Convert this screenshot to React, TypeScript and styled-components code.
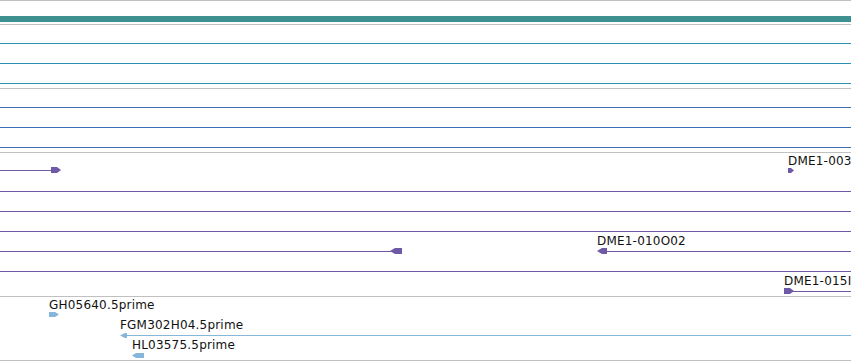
import React from "react";
import styled, { createGlobalStyle } from "styled-components";

const Global = createGlobalStyle`
  html, body { margin: 0; padding: 0; background: #ffffff; overflow: hidden; }
  #root { width: 851px; height: 361px; overflow: hidden; }
`;

const View = styled.div`
  width: 851px;
  display: flex;
  flex-direction: column;
  font-family: "DejaVu Sans", sans-serif;
`;

const Track = styled.div<{ $h: number }>`
  flex: none;
  border-top: 1px solid #c0c0c0;
  height: ${(p) => p.$h}px;
  display: flex;
  flex-direction: column;
`;

const OverviewBar = styled.div`
  margin-top: 15px;
  height: 6px;
  background: #3f9090;
`;

const Row = styled.div`
  position: relative;
  flex: none;
  height: 20px;
`;

const FeatureBox = styled.div<{ $x: number; $w: number }>`
  position: absolute;
  top: 0;
  bottom: 0;
  left: ${(p) => p.$x}px;
  width: ${(p) => p.$w}px;
`;

const Label = styled.div`
  position: absolute;
  left: 0;
  top: 1px;
  font-size: 12px;
  line-height: 14px;
  letter-spacing: 0.2px;
  color: #111111;
  white-space: nowrap;
`;

const Line = styled.div<{ $y: number; $c: string; $from: number; $to: number }>`
  position: absolute;
  top: ${(p) => p.$y}px;
  left: ${(p) => p.$from}px;
  width: ${(p) => p.$to - p.$from}px;
  height: 1px;
  background: ${(p) => p.$c};
`;

const Arrow = styled.svg<{ $y: number; $x: number }>`
  position: absolute;
  top: ${(p) => p.$y}px;
  left: ${(p) => p.$x}px;
  display: block;
`;

type Dir = "left" | "right";
type Feat = {
  x: number;
  w: number;
  label?: string;
  line?: [number, number];
  arrow?: { at: number; w: number; h: number; dir: Dir; tip?: number };
  y?: number;
};

const TEAL = "#2a8fae";
const BLUE = "#3b6db5";
const PURPLE = "#6e59a6";
const LIGHT = "#86b6da";

function ArrowHead({ a, y, c }: { a: NonNullable<Feat["arrow"]>; y: number; c: string }) {
  const tip = a.tip ?? Math.min(4, a.w);
  const { w, h } = a;
  const pts =
    a.dir === "right"
      ? `0,0 ${w - tip},0 ${w},${h / 2} ${w - tip},${h} 0,${h}`
      : `0,${h / 2} ${tip},0 ${w},0 ${w},${h} ${tip},${h}`;
  return (
    <Arrow $x={a.at} $y={y - Math.floor(h / 2)} width={w} height={h} viewBox={`0 0 ${w} ${h}`}>
      <polygon points={pts} fill={c} />
    </Arrow>
  );
}

function Feature({ f, c }: { f: Feat; c: string }) {
  const y = f.y ?? 18;
  return (
    <FeatureBox $x={f.x} $w={f.w}>
      {f.label && <Label>{f.label}</Label>}
      {f.line && <Line $y={y} $c={c} $from={f.line[0]} $to={f.line[1]} />}
      {f.arrow && <ArrowHead a={f.arrow} y={y} c={c} />}
    </FeatureBox>
  );
}

const full: Feat = { x: 0, w: 851, line: [0, 851] };

const dRows: Feat[][] = [
  [
    { x: 0, w: 61, y: 17, line: [0, 53], arrow: { at: 51, w: 10, h: 6, dir: "right" } },
    { x: 788, w: 63, y: 17, label: "DME1-003", arrow: { at: 0, w: 6, h: 5, dir: "right", tip: 3 } },
  ],
  [full],
  [full],
  [full],
  [
    { x: 0, w: 402, line: [0, 392], arrow: { at: 390, w: 12, h: 6, dir: "left", tip: 5 } },
    { x: 597, w: 254, label: "DME1-010O02", line: [4, 254], arrow: { at: 0, w: 10, h: 6, dir: "left", tip: 5 } },
  ],
  [full],
  [{ x: 784, w: 67, label: "DME1-015I", line: [6, 67], arrow: { at: 0, w: 10, h: 6, dir: "right" } }],
];

const eRows: Feat[][] = [
  [{ x: 49, w: 100, y: 17, label: "GH05640.5prime", arrow: { at: 0, w: 10, h: 5, dir: "right", tip: 4 } }],
  [{ x: 120, w: 731, label: "FGM302H04.5prime", line: [4, 731], arrow: { at: 0, w: 7, h: 5, dir: "left", tip: 5 } }],
  [{ x: 132, w: 100, label: "HL03575.5prime", arrow: { at: 0, w: 12, h: 5, dir: "left", tip: 4 } }],
];

function Rows({ rows, c }: { rows: Feat[][]; c: string }) {
  return (
    <>
      {rows.map((r, i) => (
        <Row key={i}>
          {r.map((f, j) => (
            <Feature key={j} f={f} c={c} />
          ))}
        </Row>
      ))}
    </>
  );
}

export default function App() {
  return (
    <>
      <Global />
      <View>
        <Track $h={23}>
          <OverviewBar />
        </Track>
        <Track $h={63}>
          <Rows rows={[[full], [full], [full]]} c={TEAL} />
        </Track>
        <Track $h={63}>
          <Rows rows={[[full], [full], [full]]} c={BLUE} />
        </Track>
        <Track $h={143}>
          <Rows rows={dRows} c={PURPLE} />
        </Track>
        <Track $h={63}>
          <Rows rows={eRows} c={LIGHT} />
        </Track>
        <Track $h={0} />
      </View>
    </>
  );
}
